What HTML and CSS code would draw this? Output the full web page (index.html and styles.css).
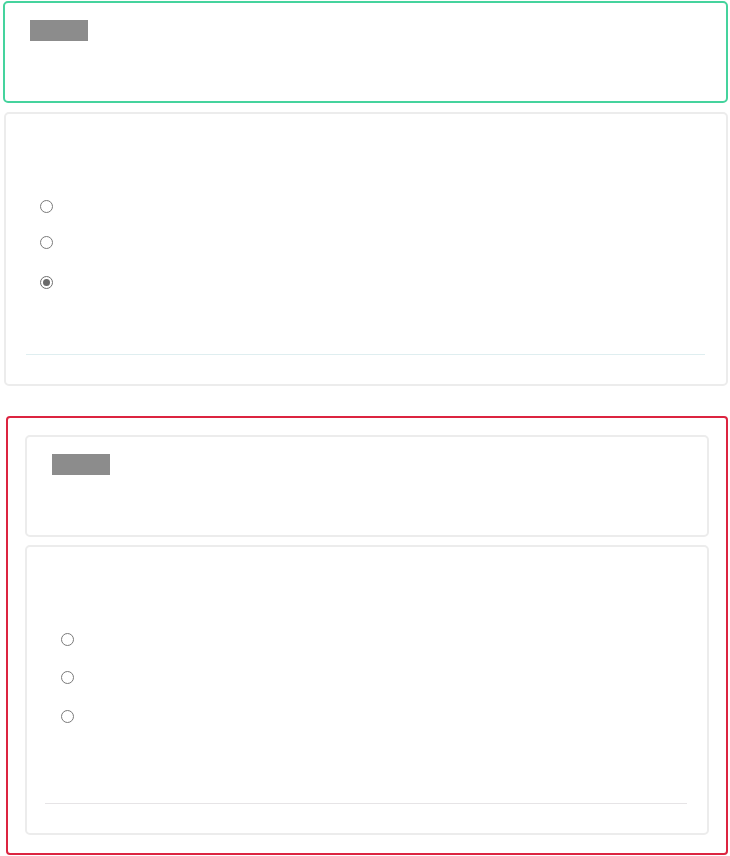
FILE: index.html
```html
<!DOCTYPE html>
<html>
<head>
<meta charset="utf-8">
<link rel="stylesheet" href="styles.css">
</head>
<body>
<div class="page">
  <div class="card card-green header-card">
    <div class="tag"></div>
  </div>
  <div class="card body-card body-card-top">
    <div class="options">
      <span class="radio"></span>
      <span class="radio"></span>
      <span class="radio checked"></span>
    </div>
    <div class="rule rule-blue"></div>
  </div>
  <div class="red-box">
    <div class="card header-card">
      <div class="tag"></div>
    </div>
    <div class="card body-card body-card-bottom">
      <div class="options options-even">
        <span class="radio"></span>
        <span class="radio"></span>
        <span class="radio"></span>
      </div>
      <div class="rule rule-gray"></div>
    </div>
  </div>
</div>
</body>
</html>
```

FILE: styles.css
```css
html, body {
  margin: 0;
  padding: 0;
  background: #ffffff;
  font-family: "Open Sans", "Liberation Sans", sans-serif;
}

.page {
  width: 730px;
  padding: 1px 2px 0 3px;
  box-sizing: border-box;
  display: flex;
  flex-direction: column;
}

.card {
  border: 2px solid #ececec;
  border-radius: 5px;
  background: #fff;
  box-sizing: border-box;
}

.card-green {
  border-color: #45d39d;
}

.header-card {
  height: 102px;
  padding: 17px 0 0 25px;
}

.header-card .tag {
  width: 58px;
  height: 21px;
  background: #8c8c8c;
}

.body-card-top {
  margin-top: 9px;
  margin-left: 1px;
  height: 274px;
  padding: 86px 21px 0 20px;
}

.options {
  display: flex;
  flex-direction: column;
  align-items: flex-start;
  padding-left: 14px;
}

.radio {
  display: block;
  width: 13px;
  height: 13px;
  border: 1px solid #7a7a7a;
  border-radius: 50%;
  box-sizing: border-box;
  background: #fff;
  position: relative;
}

.options .radio:nth-child(2) { margin-top: 23px; }
.options .radio:nth-child(3) { margin-top: 27px; }

.radio.checked {
  border-color: #6f6f6f;
}
.radio.checked::after {
  content: "";
  position: absolute;
  left: 2px;
  top: 2px;
  width: 7px;
  height: 7px;
  border-radius: 50%;
  background: #6a6a6a;
}

.rule {
  height: 1px;
}

.body-card-top .rule {
  margin-top: 65px;
}

.rule-blue {
  background: #dfeef0;
}

.red-box {
  margin-top: 30px;
  margin-left: 3px;
  width: 722px;
  height: 439px;
  border: 2px solid #dc2440;
  border-radius: 4px;
  box-sizing: border-box;
  padding: 17px 17px 0 17px;
  display: flex;
  flex-direction: column;
}

.body-card-bottom {
  margin-top: 8px;
  height: 290px;
  padding: 86px 20px 0 18px;
}

.options-even .radio:nth-child(2) { margin-top: 25px; }
.options-even .radio:nth-child(3) { margin-top: 26px; }

.body-card-bottom .options {
  padding-left: 16px;
}

.body-card-bottom .rule {
  margin-top: 80px;
}

.rule-gray {
  background: #e6e4e6;
}
```
